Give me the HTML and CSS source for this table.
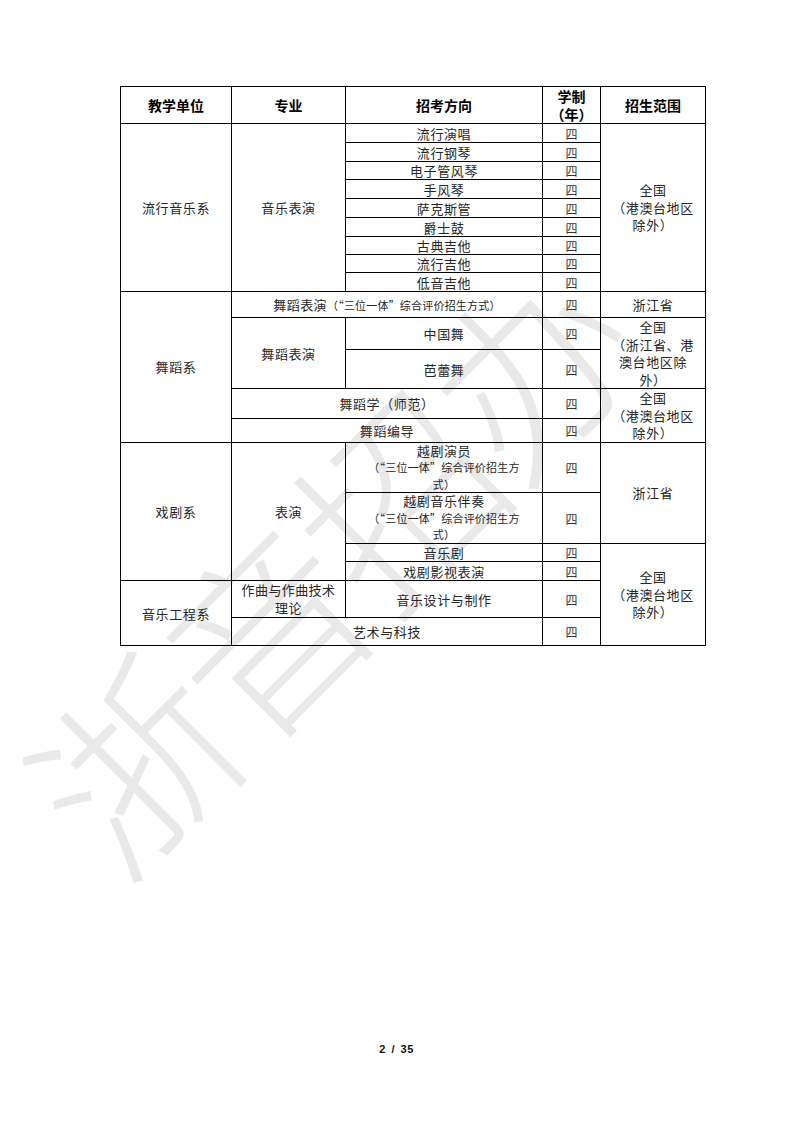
FILE: index.html
```
<!DOCTYPE html>
<html lang="zh-CN">
<head>
<meta charset="utf-8">
<title>招生专业</title>
<link rel="stylesheet" href="styles.css">
</head>
<body>
<div class="page">
  <table class="plan">
    <colgroup>
      <col class="c1"><col class="c2"><col class="c3"><col class="c4"><col class="c5">
    </colgroup>
    <thead>
      <tr class="h36">
        <th>教学单位</th>
        <th>专业</th>
        <th>招考方向</th>
        <th class="two">学制<br>（年）</th>
        <th>招生范围</th>
      </tr>
    </thead>
    <tbody>
      <tr class="h19">
        <td rowspan="9">流行音乐系</td>
        <td rowspan="9">音乐表演</td>
        <td>流行演唱</td><td class="yr">四</td>
        <td rowspan="9" class="scope">全国<br>（港澳台地区<br>除外）</td>
      </tr>
      <tr class="h19"><td>流行钢琴</td><td class="yr">四</td></tr>
      <tr class="h18"><td>电子管风琴</td><td class="yr">四</td></tr>
      <tr class="h19"><td>手风琴</td><td class="yr">四</td></tr>
      <tr class="h19"><td>萨克斯管</td><td class="yr">四</td></tr>
      <tr class="h19"><td>爵士鼓</td><td class="yr">四</td></tr>
      <tr class="h18"><td>古典吉他</td><td class="yr">四</td></tr>
      <tr class="h18"><td>流行吉他</td><td class="yr">四</td></tr>
      <tr class="h19"><td>低音吉他</td><td class="yr">四</td></tr>

      <tr class="h26">
        <td rowspan="5">舞蹈系</td>
        <td colspan="2" class="tight">舞蹈表演<span class="sm">（“三位一体”综合评价招生方式）</span></td>
        <td class="yr">四</td>
        <td class="scope">浙江省</td>
      </tr>
      <tr class="h32">
        <td rowspan="2">舞蹈表演</td>
        <td>中国舞</td><td class="yr">四</td>
        <td rowspan="2" class="scope">全国<br>（浙江省、港<br>澳台地区除<br>外）</td>
      </tr>
      <tr class="h39"><td>芭蕾舞</td><td class="yr">四</td></tr>
      <tr class="h30">
        <td colspan="2">舞蹈学（师范）</td><td class="yr">四</td>
        <td rowspan="2" class="scope">全国<br>（港澳台地区<br>除外）</td>
      </tr>
      <tr class="h23"><td colspan="2">舞蹈编导</td><td class="yr">四</td></tr>

      <tr class="h50">
        <td rowspan="4">戏剧系</td>
        <td rowspan="4">表演</td>
        <td class="multi">越剧演员<br><span class="sm">（“三位一体”综合评价招生方<br>式）</span></td>
        <td class="yr">四</td>
        <td rowspan="2" class="scope">浙江省</td>
      </tr>
      <tr class="h51">
        <td class="multi">越剧音乐伴奏<br><span class="sm">（“三位一体”综合评价招生方<br>式）</span></td>
        <td class="yr">四</td>
      </tr>
      <tr class="h18">
        <td>音乐剧</td><td class="yr">四</td>
        <td rowspan="4" class="scope">全国<br>（港澳台地区<br>除外）</td>
      </tr>
      <tr class="h19"><td>戏剧影视表演</td><td class="yr">四</td></tr>

      <tr class="h37">
        <td rowspan="2">音乐工程系</td>
        <td class="two">作曲与作曲技术<br>理论</td>
        <td>音乐设计与制作</td><td class="yr">四</td>
      </tr>
      <tr class="h28"><td colspan="2">艺术与科技</td><td class="yr">四</td></tr>
    </tbody>
  </table>

  <div class="footer">2 / 35</div>

  <div class="watermark" aria-hidden="true">浙音招办</div>
</div>
</body>
</html>
```
FILE: styles.css
```
* { box-sizing: border-box; }

html, body {
  margin: 0;
  padding: 0;
  background: #ffffff;
}

.page {
  position: relative;
  width: 793px;
  height: 1122px;
  overflow: hidden;
  display: flex;
  flex-direction: column;
  align-items: flex-start;
  padding: 86px 0 0 120px;
  font-family: "Noto Sans CJK SC", "Noto Sans", sans-serif;
  color: #262626;
}

.plan {
  position: relative;
  z-index: 1;
  border-collapse: collapse;
  table-layout: fixed;
  width: 585px;
  border: 1.3px solid #000;
}

.c1 { width: 111px; }
.c2 { width: 114px; }
.c3 { width: 197px; }
.c4 { width: 58px; }
.c5 { width: 105px; }

.plan th,
.plan td {
  border: 1px solid #000;
  padding: 0 2px;
  text-align: center;
  vertical-align: middle;
  font-size: 13px;
  line-height: 17px;
  letter-spacing: 0.6px;
  font-weight: 400;
}

.plan th {
  font-weight: 700;
  font-size: 14px;
  line-height: 18px;
  letter-spacing: 0;
  color: #000;
}

.plan th.two {
  line-height: 18px;
}

.plan td.yr {
  font-size: 12px;
  letter-spacing: 0;
  color: #333;
}

.plan td.scope {
  line-height: 17.5px;
}

.plan td.multi {
  line-height: 16.5px;
}

.plan td.two {
  line-height: 18px;
  letter-spacing: 0.4px;
}

.plan td.tight {
  letter-spacing: 0.4px;
}

.sm {
  font-size: 11px;
  letter-spacing: 0.2px;
}

.h18 { height: 18px; }
.h19 { height: 19px; }
.h23 { height: 23px; }
.h26 { height: 26px; }
.h28 { height: 28px; }
.h30 { height: 30px; }
.h32 { height: 32px; }
.h36 { height: 36px; }
.h37 { height: 37px; }
.h39 { height: 39px; }
.h50 { height: 50px; }
.h51 { height: 51px; }

.footer {
  margin-top: auto;
  align-self: stretch;
  margin-left: -120px;
  margin-bottom: 66px;
  text-align: center;
  font-family: "Liberation Sans", Arial, sans-serif;
  font-weight: 700;
  font-size: 11px;
  line-height: 14px;
  letter-spacing: 0.5px;
  color: #111;
  word-spacing: 2px;
}

.watermark {
  position: absolute;
  left: 60px;
  top: 730px;
  transform: rotate(-45deg);
  transform-origin: 0 50%;
  font-family: "Noto Sans CJK SC", sans-serif;
  font-weight: 300;
  font-size: 195px;
  line-height: 195px;
  height: 195px;
  letter-spacing: -8px;
  white-space: nowrap;
  color: rgba(0, 0, 0, 0.085);
  pointer-events: none;
}
```
